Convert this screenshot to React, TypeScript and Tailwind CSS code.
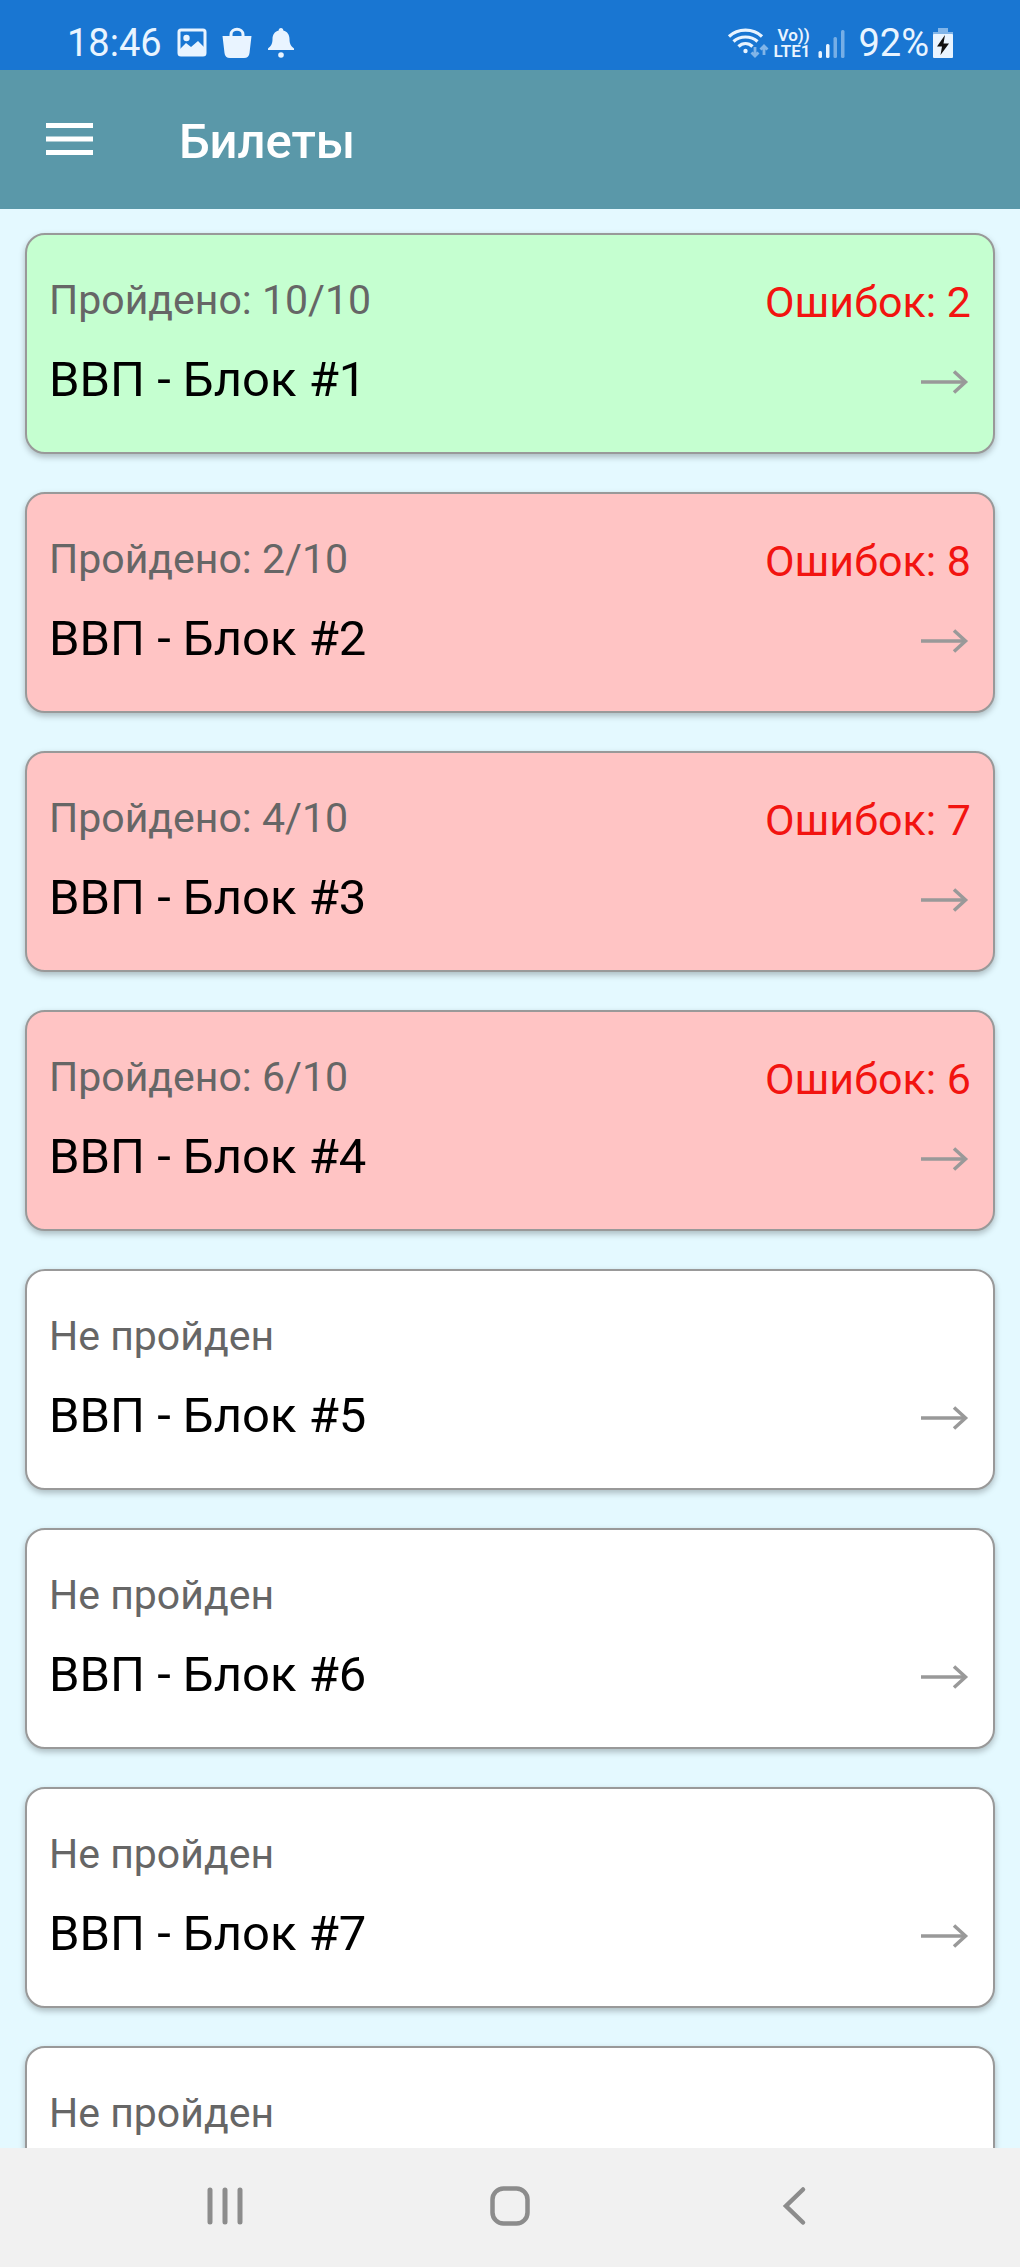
import React from 'react'

type TicketStatus = 'passed' | 'failed' | 'new'

interface Ticket {
  id: number
  title?: string
  status: TicketStatus
  progress: string
  errors?: number
}

const tickets: Ticket[] = [
  { id: 1, title: 'ВВП - Блок #1', status: 'passed', progress: 'Пройдено: 10/10', errors: 2 },
  { id: 2, title: 'ВВП - Блок #2', status: 'failed', progress: 'Пройдено: 2/10', errors: 8 },
  { id: 3, title: 'ВВП - Блок #3', status: 'failed', progress: 'Пройдено: 4/10', errors: 7 },
  { id: 4, title: 'ВВП - Блок #4', status: 'failed', progress: 'Пройдено: 6/10', errors: 6 },
  { id: 5, title: 'ВВП - Блок #5', status: 'new', progress: 'Не пройден' },
  { id: 6, title: 'ВВП - Блок #6', status: 'new', progress: 'Не пройден' },
  { id: 7, title: 'ВВП - Блок #7', status: 'new', progress: 'Не пройден' },
  { id: 8, status: 'new', progress: 'Не пройден' },
]

const cardColors: Record<TicketStatus, string> = {
  passed: 'bg-[#c5ffd0]',
  failed: 'bg-[#ffc4c4]',
  new: 'bg-white',
}

function StatusBar() {
  return (
    <div className="flex h-[70px] shrink-0 items-end justify-between bg-[#1976d2] px-[67px] pb-2 text-[38px] leading-[38px] text-[#e9f4ff]">
      <div className="flex items-center gap-[15px]">
        <span>18:46</span>
        {/* Picture */}
        <svg className="h-8 w-[30px]" viewBox="0 0 30 32" fill="none">
          <rect x="2" y="3" width="26" height="25" rx="2" stroke="currentColor" strokeWidth="3" />
          <circle cx="9.500" cy="11" r="3.200" fill="currentColor" />
          <path d="M2 23 L9 16 L14 20 L21 14 L28 21 V28 H2 Z" fill="currentColor" />
        </svg>
        {/* Shopping bag */}
        <svg className="h-8 w-[30px]" viewBox="0 0 30 32" fill="none">
          <path d="M9 11 V7.500 C9 0.500 21 0.500 21 7.500 V11" stroke="currentColor" strokeWidth="3" />
          <path d="M0.500 9 H29.500 L27.500 26 Q27 31 22 31 H8 Q3 31 2.500 26 Z" fill="currentColor" />
        </svg>
        {/* Bell */}
        <svg className="h-8 w-[28px]" viewBox="0 0 28 32" fill="currentColor">
          <path d="M14 1 C15.500 1 16.300 2 16.300 3.500 C20.500 4.500 22.500 8 22.500 12 C22.500 17 24 19 27 21.500 V23 H1 V21.500 C4 19 5.500 17 5.500 12 C5.500 8 7.500 4.500 11.700 3.500 C11.700 2 12.500 1 14 1 Z" />
          <circle cx="14" cy="28" r="2.800" />
        </svg>
      </div>

      <div className="flex items-center">
        {/* Wi-Fi */}
        <svg className="h-8 w-[42px]" viewBox="0 0 42 32" fill="none" stroke="currentColor">
          <path d="M2 9.500 C11 1 26 1 35 9.500" strokeWidth="3.200" />
          <path d="M6.500 14.500 C13 8.500 24 8.500 30.500 14.500" strokeWidth="3.200" />
          <path d="M11.500 19.500 C15.500 15.500 21.500 15.500 25.500 19.500" strokeWidth="3.200" />
          <circle cx="18.500" cy="24" r="2.200" fill="currentColor" stroke="none" />
          <g opacity="0.500" strokeWidth="2.800">
            <path d="M28 20 V29 M24.500 25.500 L28 29 L31.500 25.500" />
            <path d="M37 28 V19 M33.500 22.500 L37 19 L40.500 22.500" />
          </g>
        </svg>
        <span className="ml-1 flex flex-col text-[17px] leading-4 font-semibold">
          <span className="pl-1">Vo))</span>
          <span>LTE1</span>
        </span>
        {/* Signal */}
        <svg className="ml-2 h-8 w-[28px]" viewBox="0 0 28 32" fill="currentColor">
          <rect x="0.500" y="24" width="3.500" height="7" rx="1.500" />
          <rect x="8" y="17" width="3.500" height="14" rx="1.500" />
          <rect x="15.500" y="10" width="3.500" height="21" rx="1.500" opacity="0.450" />
          <rect x="23" y="3" width="3.500" height="28" rx="1.500" opacity="0.450" />
        </svg>
        <span className="ml-3">92%</span>
        {/* Battery */}
        <svg className="ml-1 h-8 w-5" viewBox="0 0 20 32">
          <path d="M5 1 H15 V5 H20 V8 H0 V5 H5 Z" fill="currentColor" opacity="0.500" />
          <rect y="7" width="20" height="24" rx="1" fill="currentColor" />
          <path d="M12 8 L4 19.500 H9 L7.500 28 L16 16.500 H10.500 Z" fill="#111" />
        </svg>
      </div>
    </div>
  )
}

function AppHeader() {
  return (
    <header className="flex h-[139px] shrink-0 items-center bg-[#5a98a9] px-[46px] text-white">
      <button type="button" aria-label="Меню" className="mr-[86px]">
        <svg className="h-[34px] w-[47px]" viewBox="0 0 47 34" fill="currentColor">
          <rect width="47" height="5" />
          <rect y="13.500" width="47" height="5" />
          <rect y="27" width="47" height="5" />
        </svg>
      </button>
      <h1 className="pt-1 text-[49px] leading-[60px] font-medium">Билеты</h1>
    </header>
  )
}

function TicketCard({ ticket }: { ticket: Ticket }) {
  return (
    <a
      href={`#ticket-${ticket.id}`}
      className={`flex h-[221px] justify-between rounded-[20px] border-2 border-[#999] px-[22px] pt-[41px] shadow-[0_3px_6px_rgba(0,0,0,0.25)] ${cardColors[ticket.status]}`}
    >
      <div className="flex flex-col gap-7">
        <span className="text-[41px] leading-[48px] text-[#666]">{ticket.progress}</span>
        {ticket.title && <span className="text-[49px] leading-[56px] text-black">{ticket.title}</span>}
      </div>
      <div className="flex flex-col items-end gap-7">
        <span className="h-[52px] text-[43px] leading-[52px] text-[#f21410]">
          {ticket.errors !== undefined && `Ошибок: ${ticket.errors}`}
        </span>
        <svg className="h-[52px] w-[50px] text-[#999]" viewBox="0 0 50 52" fill="none" stroke="currentColor">
          <path d="M0 26 H45" strokeWidth="3.500" />
          <path d="M33 15.500 L44.500 26 L33 36.500" strokeWidth="3.500" />
        </svg>
      </div>
    </a>
  )
}

function NavigationBar() {
  return (
    <nav className="grid h-[119px] shrink-0 grid-cols-3 bg-[#f1f1f1] px-[82px] pb-1 text-[#8c8c8c]">
      <button type="button" aria-label="Недавние" className="flex items-center justify-center">
        <svg className="size-10" viewBox="0 0 40 40" stroke="currentColor" strokeWidth="5" strokeLinecap="round">
          <path d="M5 4 V36 M20 4 V36 M35 4 V36" />
        </svg>
      </button>
      <button type="button" aria-label="Домой" className="flex items-center justify-center">
        <svg className="size-10" viewBox="0 0 40 40" fill="none" stroke="currentColor" strokeWidth="4.500">
          <rect x="2.500" y="2.500" width="35" height="35" rx="11" />
        </svg>
      </button>
      <button type="button" aria-label="Назад" className="flex items-center justify-center">
        <svg className="size-10" viewBox="0 0 40 40" fill="none" stroke="currentColor" strokeWidth="4.500" strokeLinecap="round">
          <path d="M28 3.500 L11 20 L28 36.500" />
        </svg>
      </button>
    </nav>
  )
}

export default function App() {
  return (
    <div className="flex h-screen flex-col bg-[#e4f9ff] font-[Roboto,sans-serif]">
      <StatusBar />
      <AppHeader />
      <main className="min-h-0 flex-1 overflow-y-auto [scrollbar-width:none]">
        <ul className="flex flex-col gap-[38px] px-[25px] py-6">
          {tickets.map((ticket) => (
            <li key={ticket.id}>
              <TicketCard ticket={ticket} />
            </li>
          ))}
        </ul>
      </main>
      <NavigationBar />
    </div>
  )
}
